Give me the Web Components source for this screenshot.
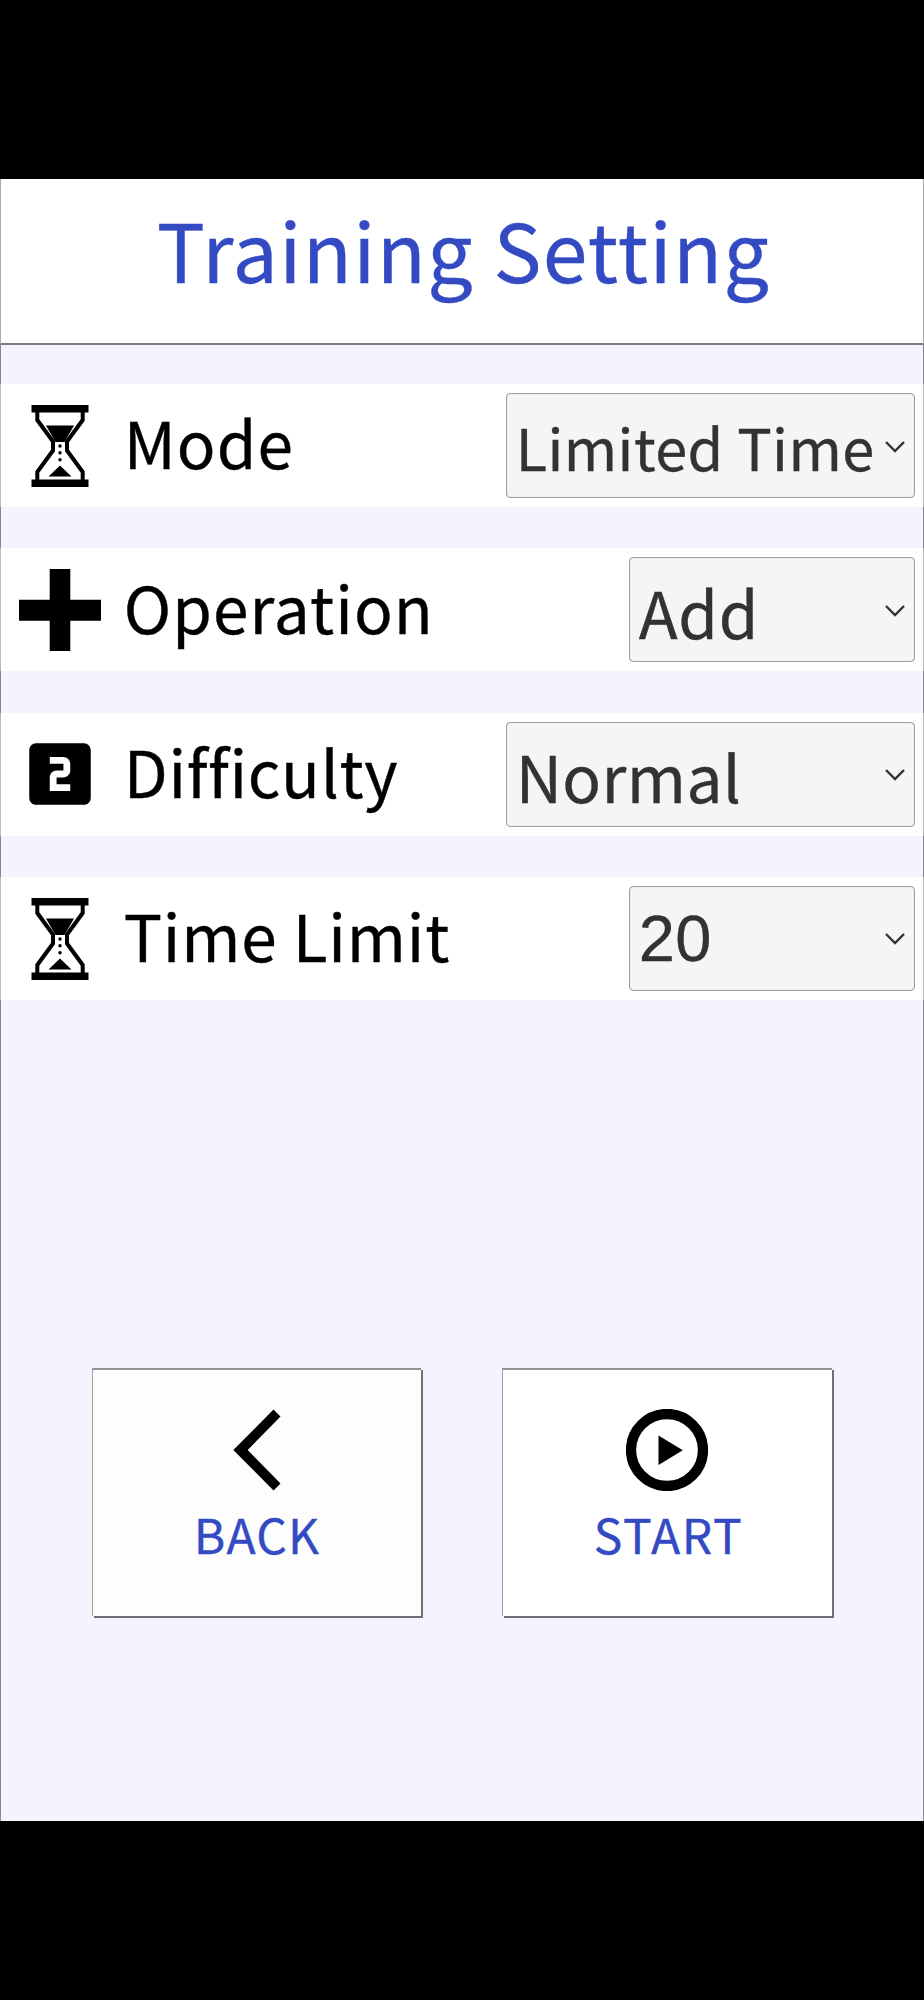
<!DOCTYPE html>
<html lang="en">
<head>
<meta charset="utf-8">
<title>Training Setting</title>
<style>
html,body{margin:0;background:#000}
body{font-family:"Noto Sans CJK JP","Noto Sans",sans-serif;-webkit-text-stroke:.35px currentColor}
</style>
</head>
<body>
<training-screen></training-screen>
<script>
const icons = {
  hourglass: `<svg width="82" height="82" viewBox="0 0 82 82"><path d="M12.5 0h57v7.6h-57zM12.5 74.4h57V82h-57z"/><path d="M18.3 7v8L34 36.5v9L18.3 67v8M63.700 7v8L48 36.500v9L63.700 67v8" fill="none" stroke="#000" stroke-width="4"/><path d="M27 20.500h28L45.500 37h-9zM29.500 71.500h23L41 60.500z"/><circle cx="41" cy="41" r="1.700"/><circle cx="41" cy="47.700" r="1.700"/><circle cx="41" cy="54.700" r="1.700"/></svg>`,
  plus: `<svg width="82" height="82" viewBox="0 0 82 82"><path d="M30.700 0h20.600v30.700H82v21H51.300V82H30.700V51.700H0v-21h30.700z"/></svg>`,
  two: `<svg width="82" height="82" viewBox="0 0 24 24"><path fill-rule="evenodd" d="M19 3H5c-1.100 0-2 .9-2 2v14c0 1.100.9 2 2 2h14c1.100 0 2-.9 2-2V5c0-1.100-.9-2-2-2zm-4 8c0 1.110-.9 2-2 2h-2v2h4v2H9v-4c0-1.110.9-2 2-2h2V9H9V7h4c1.100 0 2 .890 2 2v2z"/></svg>`,
  back: `<svg width="82" height="82" viewBox="0 0 82 82"><path d="M57.500.5l7 7L31.700 41l32.800 33.500-7 7L17.300 41z"/></svg>`,
  play: `<svg width="82" height="82" viewBox="0 0 82 82"><circle cx="41" cy="41" r="36" fill="none" stroke="#000" stroke-width="10.300"/><path d="M32.500 26.500v29.500l24.300-14.750z"/></svg>`
};
const define = (name, render) => customElements.define(name, class extends HTMLElement {
  connectedCallback() {
    if (this.shadowRoot) return;
    this.attachShadow({mode: 'open'}).innerHTML = render(this);
  }
});

define('ui-icon', el => `<style>:host{display:block;width:82px;height:82px}svg{display:block}</style>${icons[el.getAttribute('name')]}`);

define('page-header', () => `<style>
:host{display:block;box-sizing:border-box;height:166px;background:#fff;border-bottom:2px solid #7b7b7d;border-left:1px solid #aaa;border-right:1px solid #aaa;color:#334ac3;text-align:center}
h1{margin:0;padding-left:3px;font-weight:400;font-size:80.5px;line-height:138px;letter-spacing:1.37px;white-space:nowrap}
</style><h1><slot></slot></h1>`);

define('select-box', () => `<style>
:host{display:flex;box-sizing:border-box;height:105px;border:1px solid #a0a0a0;border-radius:4px;background:#f5f5f5;color:#323232;align-items:center;justify-content:space-between;padding:0 9px 0 8.700px;box-shadow:inset 0 0 1px #aaa}
.value{white-space:nowrap;padding-top:1.400px;line-height:90px;letter-spacing:var(--spacing,1.3px);width:0}
svg{display:block;margin-top:2px}
</style><span class="value"><slot></slot></span><svg width="20" height="12" viewBox="0 0 20 12"><path d="M1 1l9 9 9-9" fill="none" stroke="#323232" stroke-width="2.400"/></svg>`);

define('setting-row', el => `<style>
:host{display:flex;box-sizing:border-box;height:123.200px;background:#fff;border-left:1px solid #bbb;border-right:1px solid #bbb;align-items:center;padding:0 8px 0 17.500px}
ui-icon{margin-top:.600px}
.label{flex:1;font-size:64px;line-height:90px;letter-spacing:var(--label-spacing,1.1px);padding:0 0 8.600px 23.200px;white-space:nowrap}
</style><ui-icon name="${el.getAttribute('icon')}"></ui-icon><span class="label">${el.getAttribute('label')}</span><slot></slot>`);

define('action-button', el => `<style>
:host{display:flex;box-sizing:border-box;flex-direction:column;align-items:center;width:var(--width,330px);height:248px;padding-top:39px;background:var(--face,#fff);border-top:2px solid #929299;border-left:1px solid #a0a0a6;box-shadow:2px 2px 0 #707074;color:#334ac3}
ui-icon{margin-left:-1px}
.text{font-size:48px;line-height:70px;margin-top:6.500px;padding-left:var(--nudge,0px);letter-spacing:var(--spacing,0px)}
</style><ui-icon name="${el.getAttribute('icon')}"></ui-icon><span class="text"><slot></slot></span>`);

define('training-screen', () => `<style>
:host{display:block;box-sizing:border-box;width:924px;height:2000px;padding:179px 0;background:#000;overflow:hidden}
main{display:flex;flex-direction:column;height:1642px;background:linear-gradient(#88888e,#88888e) left/1px 100% no-repeat,linear-gradient(#88888e,#88888e) right/1px 100% no-repeat,#f4f4ff}
.rows{display:flex;flex-direction:column;gap:41.100px;margin-top:39px}
.difficulty{--label-spacing:.660px}
.time{--label-spacing:.820px}
.wide,.narrow{font-size:64px}
.wide{width:409px;--spacing:.400px}
.narrow{width:286px;--spacing:.700px}
.wide.limited{font-size:57.700px;--spacing:.430px}
.narrow.number{font-family:"Liberation Sans",sans-serif;font-size:65px;--spacing:.500px}
nav{display:flex;gap:81px;margin:368px 0 0 92px}
.back{--face:#fdfdfd;--width:329px;--spacing:1.200px}
.start{--spacing:1.500px;--nudge:2px}
</style><main>
<page-header>Training Setting</page-header>
<section class="rows">
<setting-row icon="hourglass" label="Mode"><select-box class="wide limited">Limited Time</select-box></setting-row>
<setting-row icon="plus" label="Operation"><select-box class="narrow">Add</select-box></setting-row>
<setting-row class="difficulty" icon="two" label="Difficulty"><select-box class="wide">Normal</select-box></setting-row>
<setting-row class="time" icon="hourglass" label="Time Limit"><select-box class="narrow number">20</select-box></setting-row>
</section>
<nav><action-button class="back" icon="back">BACK</action-button><action-button class="start" icon="play">START</action-button></nav>
</main>`);
</script>
</body>
</html>
